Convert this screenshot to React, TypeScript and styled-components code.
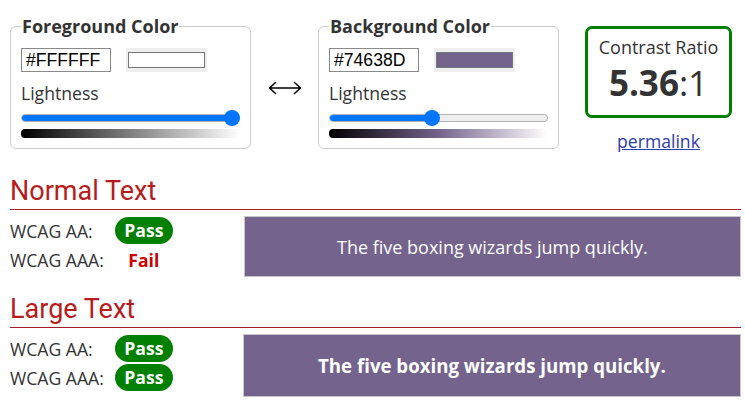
import React from "react";
import styled, { createGlobalStyle } from "styled-components";

const Global = createGlobalStyle`
  html, body { margin: 0; padding: 0; background: #fff; }
  body {
    font-family: "Open Sans", "Liberation Sans", sans-serif;
    color: #333;
    font-size: 17.6px;
    line-height: 24px;
  }
`;

const Page = styled.div`
  width: 745px;
  box-sizing: border-box;
  padding: 0 4px 0 10px;
`;

const TopRow = styled.div`
  display: flex;
  align-items: flex-start;
  padding-top: 14px;
`;

const Field = styled.fieldset`
  margin: 0;
  width: 241px;
  min-width: 0;
  box-sizing: border-box;
  border: 1px solid #ccc;
  border-radius: 6px;
  padding: 10px 10px 10px 10px;
`;

const Legend = styled.legend`
  font-weight: 700;
  font-size: 18px;
  line-height: 24px;
  padding: 0 1px;
  color: #333;
`;

const InputRow = styled.div`
  display: flex;
  align-items: center;
  gap: 15px;
`;

const HexInput = styled.input`
  width: 90px;
  height: 24px;
  box-sizing: border-box;
  border: 1px solid #8a8a8a;
  padding: 0 0 0 4px;
  margin: 0;
  font-family: "Liberation Sans", Arial, sans-serif;
  font-size: 17.6px;
  color: #000;
  background: #fff;
  outline: none;
`;

const Swatch = styled.div`
  width: 81px;
  height: 24px;
  box-sizing: border-box;
  padding: 4px 2px;
  background: #efefef;
`;

const SwatchInner = styled.div<{ $color: string }>`
  height: 100%;
  box-sizing: border-box;
  border: 1px solid #767676;
  background: ${(p) => p.$color};
`;

const Label = styled.div`
  margin-top: 9px;
  font-size: 17.6px;
  line-height: 24px;
  color: #333;
`;

const SliderWrap = styled.div`
  position: relative;
  height: 16px;
  margin-top: 5px;
  display: flex;
  align-items: center;
`;

const Track = styled.div`
  position: relative;
  width: 100%;
  height: 8px;
  box-sizing: border-box;
  border: 1px solid #b2b2b2;
  border-radius: 4px;
  background: #efefef;
  overflow: hidden;
`;

const Fill = styled.div`
  position: absolute;
  left: -1px;
  top: -1px;
  bottom: -1px;
  background: #0075ff;
`;

const Thumb = styled.div`
  position: absolute;
  top: 0;
  width: 16px;
  height: 16px;
  border-radius: 50%;
  background: #0075ff;
`;

const Gradient = styled.div<{ $stops: string }>`
  margin-top: 3px;
  height: 9px;
  border-radius: 4px 0 0 4px;
  background: linear-gradient(to right, ${(p) => p.$stops});
`;

const ArrowCol = styled.div`
  width: 67px;
  align-self: center;
  display: flex;
  justify-content: center;
  padding-top: 8px;
`;

const RatioCol = styled.div`
  margin-left: 26px;
  margin-top: 12px;
  width: 147px;
  display: flex;
  flex-direction: column;
  align-items: center;
`;

const RatioBox = styled.div`
  width: 147px;
  height: 92px;
  box-sizing: border-box;
  border: 3px solid #008000;
  border-radius: 7px;
  padding-top: 6px;
  text-align: center;
`;

const RatioLabel = styled.div`
  font-size: 18px;
  line-height: 24px;
`;

const RatioValue = styled.div`
  margin-top: 4px;
  font-size: 35px;
  line-height: 40px;
  color: #333;
  b { font-weight: 700; }
`;

const Permalink = styled.a`
  margin-top: 11px;
  color: #2e3cab;
  text-decoration: underline;
  font-size: 17.6px;
  line-height: 24px;
`;

const Heading = styled.h2<{ $gap: number }>`
  margin: ${(p) => p.$gap}px 0 0 0;
  font-family: Roboto, "Liberation Sans", sans-serif;
  font-weight: 400;
  font-size: 27px;
  line-height: 31px;
  color: #b71c1c;
  padding-bottom: 2px;
  border-bottom: 1px solid #a51d24;
`;

const SectionBody = styled.div`
  display: flex;
  align-items: flex-start;
  margin-top: 6px;
`;

const Results = styled.div`
  display: grid;
  grid-template-columns: auto 58px;
  grid-auto-rows: 29px;
  column-gap: 11px;
  align-items: center;
`;

const WcagLabel = styled.div`
  white-space: nowrap;
`;

const Verdict = styled.div`
  display: flex;
  justify-content: center;
`;

const PassBadge = styled.span`
  display: inline-block;
  width: 58px;
  height: 27px;
  line-height: 27px;
  border-radius: 14px;
  background: #008000;
  color: #fff;
  font-weight: 700;
  text-align: center;
`;

const FailText = styled.span`
  color: #cc0000;
  font-weight: 700;
`;

const Sample = styled.div<{ $offset: number; $height: number; $large?: boolean }>`
  flex: 1;
  margin-left: ${(p) => p.$offset}px;
  height: ${(p) => p.$height}px;
  box-sizing: border-box;
  border: 1px solid #c8c8c8;
  background: #74638d;
  color: #fff;
  display: flex;
  align-items: center;
  justify-content: center;
  font-size: ${(p) => (p.$large ? "18.67px" : "18px")};
  font-weight: ${(p) => (p.$large ? 700 : 400)};
`;

function Slider({ value }: { value: number }) {
  const thumbLeft = `calc(${value} * (100% - 16px))`;
  const fillWidth = `calc(${value} * (100% - 16px) + 9px)`;
  return (
    <SliderWrap>
      <Track>
        <Fill style={{ width: fillWidth }} />
      </Track>
      <Thumb style={{ left: thumbLeft }} />
    </SliderWrap>
  );
}

function ColorField({
  title,
  hex,
  lightness,
  stops,
}: {
  title: string;
  hex: string;
  lightness: number;
  stops: string;
}) {
  return (
    <Field>
      <Legend>{title}</Legend>
      <InputRow>
        <HexInput defaultValue={hex} />
        <Swatch>
          <SwatchInner $color={hex} />
        </Swatch>
      </InputRow>
      <Label>Lightness</Label>
      <Slider value={lightness} />
      <Gradient $stops={stops} />
    </Field>
  );
}

function SwapArrow() {
  return (
    <svg width="34" height="14" viewBox="0 0 34 14" aria-label="swap colors">
      <path
        d="M1.5 7H32.5M7.5 1.5L1.5 7L7.5 12.5M26.5 1.5L32.5 7L26.5 12.5"
        fill="none"
        stroke="#000"
        strokeWidth="1.6"
        strokeLinecap="round"
        strokeLinejoin="round"
      />
    </svg>
  );
}

export default function App() {
  return (
    <Page>
      <Global />
      <TopRow>
        <ColorField
          title="Foreground Color"
          hex="#FFFFFF"
          lightness={1}
          stops="#000000, #ffffff"
        />
        <ArrowCol>
          <SwapArrow />
        </ArrowCol>
        <ColorField
          title="Background Color"
          hex="#74638D"
          lightness={0.47}
          stops="#000000, #74638d, #ffffff"
        />
        <RatioCol>
          <RatioBox>
            <RatioLabel>Contrast Ratio</RatioLabel>
            <RatioValue>
              <b>5.36</b>:1
            </RatioValue>
          </RatioBox>
          <Permalink href="#">permalink</Permalink>
        </RatioCol>
      </TopRow>

      <Heading $gap={23}>Normal Text</Heading>
      <SectionBody>
        <Results>
          <WcagLabel>WCAG AA:</WcagLabel>
          <Verdict>
            <PassBadge>Pass</PassBadge>
          </Verdict>
          <WcagLabel>WCAG AAA:</WcagLabel>
          <Verdict>
            <FailText>Fail</FailText>
          </Verdict>
        </Results>
        <Sample $offset={71} $height={61}>
          The five boxing wizards jump quickly.
        </Sample>
      </SectionBody>

      <Heading $gap={17}>Large Text</Heading>
      <SectionBody>
        <Results>
          <WcagLabel>WCAG AA:</WcagLabel>
          <Verdict>
            <PassBadge>Pass</PassBadge>
          </Verdict>
          <WcagLabel>WCAG AAA:</WcagLabel>
          <Verdict>
            <PassBadge>Pass</PassBadge>
          </Verdict>
        </Results>
        <Sample $offset={70} $height={63} $large>
          The five boxing wizards jump quickly.
        </Sample>
      </SectionBody>
    </Page>
  );
}
